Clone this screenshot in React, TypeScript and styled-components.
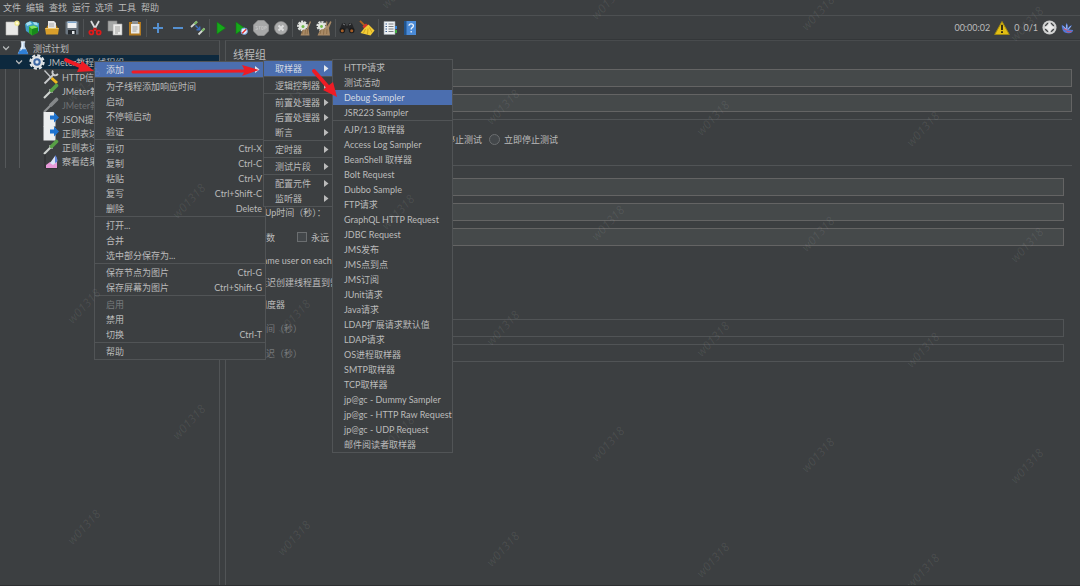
import React from 'react';
import styled, { createGlobalStyle } from 'styled-components';

const GlobalStyle = createGlobalStyle`
  * { box-sizing: border-box; }
  body {
    margin: 0;
    background: #3c3f41;
    color: #bbbbbb;
    font: 9px/15px Lato, "Noto Sans CJK SC", sans-serif;
  }
  button, input { font: inherit; color: inherit; }
`;

const Window = styled.div`
  position: relative;
  display: flex;
  flex-direction: column;
  min-height: 100vh;
  overflow: hidden;
  border-bottom: 1px solid #2d2f31;
`;

const MenuBar = styled.nav`
  display: flex;
  gap: 5px;
  height: 16px;
  padding-left: 3px;
  border-bottom: 1px solid #4d5052;
`;

const PlainButton = styled.button`
  display: flex;
  align-items: center;
  justify-content: center;
  padding: 0;
  border: 0;
  background: none;
  white-space: nowrap;
`;

const ToolBar = styled.div`
  display: flex;
  align-items: center;
  height: 24px;
  padding: 0 6px 0 2px;
  border-bottom: 1px solid #343739;
`;

const ToolButton = styled(PlainButton)`
  width: 20px;
  height: 20px;
`;

const ToolDivider = styled.span`
  width: 1px;
  height: 18px;
  margin: 0 1px;
  background: #505355;
`;

const Status = styled.div`
  display: flex;
  align-items: center;
  gap: 4px;
  margin-left: auto;
`;

const Body = styled.div`
  display: flex;
  flex: 1;
`;

const TreePane = styled.aside`
  flex: 0 0 220px;
  border-top: 1px solid #484b4d;
  border-right: 1px solid #515456;
`;

const Splitter = styled.div`
  flex: 0 0 5px;
`;

const TreeRow = styled.div<{ $level: number; $selected?: boolean; $muted?: boolean }>`
  display: flex;
  align-items: center;
  height: 14px;
  gap: 3px;
  padding-left: ${p => [3, 16, 23][p.$level]}px;
  background: ${p => (p.$selected ? '#0d293e' : 'transparent')};
  color: ${p => (p.$muted ? '#6e7173' : 'inherit')};
  white-space: nowrap;
  svg { flex: none; }
`;

const Branch = styled.div`
  margin-left: 5px;
  border-left: 1px solid #55585a;
`;

const Leaves = styled.div`
  margin-left: 13px;
  padding-top: 1px;
  border-left: 1px solid #55585a;
`;

const GroupRowWrap = styled.div`
  margin-left: -6px;
`;

const Editor = styled.main`
  flex: 1;
  min-width: 0;
  padding: 6px 8px 0 7px;
  border-top: 1px solid #484b4d;
  border-left: 1px solid #515456;
`;

const Title = styled.h1`
  margin: 0 0 6px;
  font-size: 11px;
  line-height: 16px;
  font-weight: 400;
`;

const FormRow = styled.div<{ $muted?: boolean }>`
  display: flex;
  align-items: center;
  height: 18px;
  margin-bottom: 7px;
  color: ${p => (p.$muted ? '#777a7c' : 'inherit')};
  white-space: nowrap;
`;

const FieldLabel = styled.label`
  flex: 0 0 100px;
`;

const LoopLabels = styled.div`
  display: flex;
  align-items: center;
  justify-content: space-between;
  flex: 0 0 90px;
  margin-right: 10px;
`;

const TextField = styled.input`
  flex: 1;
  min-width: 0;
  height: 18px;
  padding: 0 4px;
  border: 1px solid #646464;
  border-radius: 0;
  background: #45494a;
  &:disabled { background: #3c3f41; border-color: #515456; }
`;

const Section = styled.section<{ $gap: number; $min?: number }>`
  min-height: ${p => p.$min ?? 0}px;
  padding: ${p => p.$gap}px 8px 0 6px;
  border-top: 1px solid #515456;
`;

const CheckLabel = styled.label`
  display: flex;
  align-items: center;
  gap: 4px;
  white-space: nowrap;
`;

const CheckRows = styled.div`
  display: grid;
  grid-auto-rows: 22px;
  align-items: center;
  margin: -4px 0 4px 5px;
`;

const Tick = styled.input`
  appearance: none;
  width: 10px;
  height: 10px;
  margin: 0;
  border: 1px solid #6b6e70;
  background: #43474a;
  &[type='radio'] {
    width: 11px;
    height: 11px;
    border-radius: 50%;
  }
`;

const RadioRow = styled.div`
  display: flex;
  gap: 7px;
`;

const Popup = styled.ul<{ $x: number; $y: number; $w: number }>`
  position: absolute;
  left: ${p => p.$x}px;
  top: ${p => p.$y}px;
  width: ${p => p.$w}px;
  margin: 0;
  padding: 0;
  list-style: none;
  border: 1px solid #515456;
  background: #3c3f41;
`;

const PopupDivider = styled.li`
  height: 2px;
  border-top: 1px solid #515456;
`;

const PopupItem = styled.button<{ $active?: boolean; $inset: number }>`
  display: flex;
  align-items: center;
  justify-content: space-between;
  width: 100%;
  height: 15px;
  padding: 0 ${p => p.$inset}px 0 11px;
  border: 0;
  background: ${p => (p.$active ? '#4b6eaf' : 'transparent')};
  color: ${p => (p.$active ? '#d5dae2' : '#bbbbbb')};
  white-space: nowrap;
  &:disabled { color: #777a7c; }
`;

const Overlay = styled.svg`
  position: absolute;
  inset: 0;
  width: 100%;
  height: 100%;
  pointer-events: none;
`;

type Entry = { label: string; key?: string; active?: boolean; arrow?: boolean; off?: boolean };

const contextMenu: Entry[][] = [
  [{ label: '添加', active: true, arrow: true }],
  [{ label: '为子线程添加响应时间' }, { label: '启动' }, { label: '不停顿启动' }, { label: '验证' }],
  [
    { label: '剪切', key: 'Ctrl-X' },
    { label: '复制', key: 'Ctrl-C' },
    { label: '粘贴', key: 'Ctrl-V' },
    { label: '复写', key: 'Ctrl+Shift-C' },
    { label: '删除', key: 'Delete' },
  ],
  [{ label: '打开...' }, { label: '合并' }, { label: '选中部分保存为...' }],
  [{ label: '保存节点为图片', key: 'Ctrl-G' }, { label: '保存屏幕为图片', key: 'Ctrl+Shift-G' }],
  [{ label: '启用', off: true }, { label: '禁用' }, { label: '切换', key: 'Ctrl-T' }],
  [{ label: '帮助' }],
];

const sub = (...labels: string[]): Entry[] => labels.map(label => ({ label, arrow: true }));
const plain = (...labels: string[]): Entry[] => labels.map(label => ({ label }));

const addMenu: Entry[][] = [
  [{ label: '取样器', active: true, arrow: true }],
  sub('逻辑控制器'),
  sub('前置处理器', '后置处理器', '断言'),
  sub('定时器'),
  sub('测试片段'),
  sub('配置元件', '监听器'),
];

const samplerMenu: Entry[][] = [
  [...plain('HTTP请求', '测试活动'), { label: 'Debug Sampler', active: true }, ...plain('JSR223 Sampler')],
  plain(
    'AJP/1.3 取样器', 'Access Log Sampler', 'BeanShell 取样器', 'Bolt Request', 'Dubbo Sample',
    'FTP请求', 'GraphQL HTTP Request', 'JDBC Request', 'JMS发布', 'JMS点到点', 'JMS订阅',
    'JUnit请求', 'Java请求', 'LDAP扩展请求默认值', 'LDAP请求', 'OS进程取样器', 'SMTP取样器',
    'TCP取样器', 'jp@gc - Dummy Sampler', 'jp@gc - HTTP Raw Request', 'jp@gc - UDP Request',
    '邮件阅读者取样器',
  ),
];

type PopupProps = { groups: Entry[][]; x: number; y: number; w: number; arrowInset?: number };

function PopupMenu({ groups, x, y, w, arrowInset = 3 }: PopupProps) {
  return (
    <Popup $x={x} $y={y} $w={w}>
      {groups.map((group, g) => (
        <React.Fragment key={g}>
          {g > 0 && <PopupDivider />}
          {group.map(item => (
            <li key={item.label}>
              <PopupItem $active={item.active} $inset={item.arrow ? arrowInset : 3} disabled={item.off}>
                <span>{item.label}</span>
                {item.key && <span>{item.key}</span>}
                {item.arrow && (
                  <svg width="5" height="7" viewBox="0 0 5 7" aria-hidden="true">
                    <path d="M0 0L4.500 3.500L0 7Z" fill={item.active ? '#e4e8ee' : '#bbbbbb'} />
                  </svg>
                )}
              </PopupItem>
            </li>
          ))}
        </React.Fragment>
      ))}
    </Popup>
  );
}

const art: Record<string, React.ReactNode> = {
  file: (
    <>
      <path d="M2 2h12v13H2z" fill="#e9e9e7" stroke="#b9b9b5" strokeWidth=".6" />
      <circle cx="13" cy="3.2" r="2.6" fill="#f1ea8e" />
      <circle cx="13" cy="3.2" r="1.2" fill="#fffce0" />
    </>
  ),
  templates: (
    <>
      <path d="M1 4l5-3 4 1 5 1v8l-7 4-6-4z" fill="#3f9fc6" />
      <path d="M2 3l4-1.500 2 2.500-5 2zM9 2l4 .5 1 3-4-1z" fill="#a5def0" />
      <path d="M5 6.500l5-1 4 2v5l-6 3-3-2.500z" fill="#2fa925" />
      <path d="M5 6.500l5-1 4 2-6 1.500z" fill="#83e05f" />
      <path d="M8 9l6-1.500v5l-6 3z" fill="#178a1b" />
    </>
  ),
  open: (
    <>
      <path d="M2 8l2-3h8l2 3v6H2z" fill="#b47a12" />
      <path d="M4 1h6l2 2v6H4z" fill="#e6e6e6" />
      <path d="M5 4h5M5 6h5" stroke="#9b9b9b" strokeWidth=".8" />
      <path d="M1 8h14l-1 6.500H2z" fill="#d99f2b" />
      <path d="M1.500 8.500h13" stroke="#f3cc70" />
    </>
  ),
  save: (
    <>
      <path d="M1.500 1.500h13v13h-12l-1-1z" fill="#6b7680" />
      <path d="M3.500 1.500h9V8h-9z" fill="#eef0f2" />
      <path d="M3.500 1.500h9v1.500h-9z" fill="#7fa6cc" />
      <path d="M4 10h8v4.500H4z" fill="#252a2f" />
      <path d="M8 11h2.500v3H8z" fill="#e2e5e8" />
    </>
  ),
  cut: (
    <>
      <path d="M4 1l5 9M12 1L7 10" stroke="#d8dadb" strokeWidth="1.800" />
      <path d="M8 8l3 4M8 8l-3 4" stroke="#c21414" strokeWidth="1.800" />
      <circle cx="4.300" cy="12.500" r="2" fill="none" stroke="#e01b1b" strokeWidth="1.700" />
      <circle cx="11.700" cy="12.500" r="2" fill="none" stroke="#e01b1b" strokeWidth="1.700" />
    </>
  ),
  copy: (
    <>
      <path d="M1 1h9v10H1z" fill="#a5a7a6" stroke="#7c7e7d" strokeWidth=".6" />
      <path d="M6 4h9v11H6z" fill="#ececea" stroke="#a9a9a7" strokeWidth=".6" />
      <path d="M8 7h5M8 9h5M8 11h5M8 13h3" stroke="#8f8f8d" strokeWidth=".8" />
    </>
  ),
  paste: (
    <>
      <path d="M2 2h12v13.500H2z" fill="#b27a22" />
      <path d="M4 4h8.500v9.500H4z" fill="#ebebe9" />
      <path d="M5 1h6v3H5z" fill="#8d9092" />
      <path d="M5.500 7h5M5.500 9h5M5.500 11h4" stroke="#8f8f8d" strokeWidth=".8" />
    </>
  ),
  plus: <path d="M8 3v10M3 8h10" stroke="#5590d0" strokeWidth="2" />,
  minus: <path d="M3 8h10" stroke="#5590d0" strokeWidth="2" />,
  toggle: (
    <>
      <path d="M1 7L7 1.500" stroke="#d3d7d2" strokeWidth="1.800" />
      <path d="M4.500 4L7 1.500" stroke="#79b862" strokeWidth="2" />
      <path d="M8.500 14.500l6-6" stroke="#d3d7d2" strokeWidth="1.800" />
      <path d="M12 11l2.500-2.500" stroke="#79b862" strokeWidth="2" />
      <path d="M5.500 5.500l4 4M9.700 6.500v3.300H6.500" stroke="#3a6ec0" strokeWidth="1.400" fill="none" />
    </>
  ),
  start: <path d="M4 2l8.500 6L4 14z" fill="#17a81b" stroke="#0b7d10" strokeWidth=".6" />,
  startNoPause: (
    <>
      <path d="M3 2l8.500 6L3 14z" fill="#17a81b" stroke="#0b7d10" strokeWidth=".6" />
      <circle cx="11.200" cy="11.200" r="3.200" fill="#eaf1fb" stroke="#6d9bd8" />
      <path d="M9.200 13.200l4-4" stroke="#dd2828" strokeWidth="1.300" />
    </>
  ),
  stop: (
    <>
      <path d="M5 .3h6L15.700 5v6L11 15.700H5L.3 11V5z" fill="#a7a8a8" stroke="#8b8c8c" strokeWidth=".6" />
      <path d="M2.500 6.500h2M3 8h1.500v1.500h-2M6.500 6.500v3M5.700 6.500h2M8.700 6.500h1.500v3H8.700zM11.700 9.500v-3h1.600v1.500h-1.600" stroke="#c6c7c7" strokeWidth=".7" fill="none" />
    </>
  ),
  shutdown: (
    <>
      <circle cx="8" cy="8" r="6.500" fill="#a9aaaa" stroke="#8b8c8c" strokeWidth=".6" />
      <path d="M5.500 5.500l5 5M10.500 5.500l-5 5" stroke="#dcdddd" strokeWidth="2" />
    </>
  ),
  clear: (
    <>
      <circle cx="6.500" cy="6" r="4.500" fill="none" stroke="#dfe2e0" strokeWidth="1.800" strokeDasharray="2.200 1" />
      <circle cx="6.500" cy="6" r="3.900" fill="#e4e7e2" />
      <circle cx="7" cy="6.500" r="1.500" fill="#6fbb48" />
      <path d="M14 1l1 1-2.500 6 1 7.500H4.500L6.500 10l4-1z" fill="#a98a66" />
      <path d="M7 10l-1 4M9.500 9.500l-.5 5M11.500 9l-.3 5" stroke="#7b5c38" strokeWidth=".6" />
    </>
  ),
  clearAll: (
    <>
      <circle cx="5.500" cy="6" r="4.200" fill="none" stroke="#dfe2e0" strokeWidth="1.800" strokeDasharray="2.200 1" />
      <circle cx="5.500" cy="6" r="3.600" fill="#e4e7e2" />
      <circle cx="5.500" cy="6.500" r="1.400" fill="#6fbb48" />
      <path d="M10.500 1l1 1-1 5 4-6 1 1-2.500 6 1 7.500H1.500L4 10l5-1.500z" fill="#a98a66" />
      <path d="M5 10l-1 4M8 9.500l-.5 5M11 9l-.3 5" stroke="#7b5c38" strokeWidth=".6" />
    </>
  ),
  search: (
    <>
      <path d="M3 3.500l3-.5 1.500 3h1L10 3l3 .5 2.500 6-4 2L8 8l-3.500 3.500-4-2z" fill="#242527" />
      <circle cx="3.300" cy="10.500" r="2.800" fill="#1b1b1c" />
      <circle cx="12.700" cy="10.500" r="2.800" fill="#1b1b1c" />
      <circle cx="3.300" cy="10.700" r="1.500" fill="#a85f28" />
      <circle cx="12.700" cy="10.700" r="1.500" fill="#a85f28" />
      <path d="M4 4l2 1M10 5l2-1" stroke="#8b8e90" strokeWidth=".8" />
    </>
  ),
  broom: (
    <>
      <path d="M1 .8l5 5" stroke="#b4641c" strokeWidth="1.800" />
      <path d="M3.500 6.500l3.500-3 2.500 2L5.500 9z" fill="#d6352a" />
      <path d="M5 8.500L9.500 4.500 15.500 10.500 11.500 15.500 1.500 13z" fill="#f4cd35" />
      <path d="M6.500 9l-2 4M9 8.500l-.5 6M10.500 7.500l2.500 5" stroke="#b98a12" strokeWidth=".6" />
    </>
  ),
  functions: (
    <>
      <path d="M2 1.500h11v13H2z" fill="#edf1f4" stroke="#9aa2a8" strokeWidth=".6" />
      <path d="M3.500 4H5M3.500 6.500H5M3.500 9H5M3.500 11.500H5" stroke="#3b5f8e" strokeWidth="1.200" />
      <path d="M6.500 4h5M6.500 6.500h5M6.500 9h5M6.500 11.500h5" stroke="#5d6367" strokeWidth=".8" />
      <path d="M13 6h2v3h-2z" fill="#3a86d8" />
      <path d="M13 10h2v3h-2z" fill="#43ac43" />
    </>
  ),
  help: (
    <>
      <path d="M2 1h12v14H2z" fill="#4a8ad6" />
      <path d="M2 1h2.500v14H2z" fill="#21558f" />
      <path d="M7 5.800q0-2 2.200-2t2.200 2q0 1.200-1.200 1.800t-1 1.900M9.200 11v1.600" stroke="#eef4fb" strokeWidth="1.300" fill="none" />
    </>
  ),
  warning: (
    <>
      <path d="M8 1.500L15.300 14.500H.7z" fill="#e3bf13" stroke="#a38a12" strokeWidth="1" strokeLinejoin="round" />
      <path d="M8 4.800v5.200M8 11.300v1.600" stroke="#231f10" strokeWidth="1.800" />
    </>
  ),
  threads: (
    <>
      <circle cx="8" cy="8" r="7.500" fill="#cfd0d0" />
      <circle cx="8" cy="8" r="4.500" fill="#d9dada" stroke="#3c3f41" strokeWidth="1.600" />
      <path d="M8 2.500v11M2.500 8h11" stroke="#ececec" strokeWidth="2.600" />
    </>
  ),
  brand: (
    <>
      <path d="M1 4.500Q4 6 6 9 5 5 7 2 9 5 8.500 9 10 6 13.500 5 12.500 8 9.500 10.500L15 11Q14.500 14.500 10 15 4 15.500 2 11 .5 8 1 4.500z" fill="#4f78d8" />
      <path d="M3.500 9.500q2.500 1.500 4.500 1.500M7 13q3 .5 6-.5" stroke="#d0506a" strokeWidth="1.300" fill="none" />
      <path d="M2.500 6.500l4 4M7 4.500v5M12 6.500L8.500 10.500" stroke="#b9cbf8" strokeWidth="1" />
    </>
  ),
  flask: (
    <>
      <path d="M6 1h4v5l4 8.500H2L6 6z" fill="#c6dcf2" />
      <path d="M4.500 9.500h7L14 15H2z" fill="#2f7fd6" />
      <path d="M5.500 1h5" stroke="#eef4fa" strokeWidth="1.400" />
      <path d="M7.200 2v5l-2 4" stroke="#f6fafe" strokeWidth="1.200" fill="none" />
    </>
  ),
  gear: (
    <>
      <circle cx="8" cy="8" r="6.600" fill="none" stroke="#dfe2e5" strokeWidth="2.200" strokeDasharray="3.200 1.980" />
      <circle cx="8" cy="8" r="6" fill="#dfe2e5" />
      <circle cx="8" cy="8" r="3.700" fill="#3c67a4" />
      <circle cx="8" cy="8" r="1.700" fill="#dfe7f1" />
    </>
  ),
  config: (
    <>
      <path d="M1.500 1.500l6.500 7" stroke="#c5c8ca" strokeWidth="1.300" />
      <path d="M8.500 9l5.500 5" stroke="#eeb81e" strokeWidth="3" />
      <path d="M1.500 14.500L11 5" stroke="#c9cbcd" strokeWidth="1.800" />
      <path d="M10 1.500Q8.500 4 10.500 5.700T15 5" stroke="#c9cbcd" strokeWidth="1.800" fill="none" />
    </>
  ),
  sampler: (
    <>
      <path d="M1 15l7-7" stroke="#cfd3d0" strokeWidth="2.200" />
      <path d="M6.500 6.500l3 3" stroke="#dfe2df" strokeWidth="1.600" />
      <path d="M8.500 7.500L13.500 2.500" stroke="#58a046" strokeWidth="3.600" strokeLinecap="round" />
    </>
  ),
  samplerOff: (
    <>
      <path d="M1 15l8-8" stroke="#8f9294" strokeWidth="2.200" />
      <path d="M8 8L13.500 2.500" stroke="#85888a" strokeWidth="3.600" strokeLinecap="round" />
    </>
  ),
  extractor: (
    <>
      <path d="M.5 1h10L12.500 3.500v12H.5z" fill="#eceeef" />
      <path d="M7 4.500h4V1.500L16 6.500l-5 5V8.500H7z" fill="#1f73cf" />
    </>
  ),
  results: (
    <>
      <path d="M2 1v14h13" stroke="#2a2c2e" fill="none" />
      <path d="M3 15v-3l4-3 3 2 4-3v7z" fill="#e79ad8" />
      <path d="M7 10l5-7q3 3 2 6l-4 3z" fill="#dce4f7" />
      <path d="M12 2q3 3 2 7l-2 1z" fill="#5f83d8" />
    </>
  ),
};

function Icon({ name, size = 16 }: { name: string; size?: number }) {
  return (
    <svg width={size} height={size} viewBox="0 0 16 16" fill="none" aria-hidden="true">
      {art[name]}
    </svg>
  );
}

const Chevron = () => (
  <svg width="10" height="8" viewBox="0 0 10 8" fill="none" aria-hidden="true">
    <path d="M0 2.500L3 5.500L6 2.500" stroke="#b4b6b7" strokeWidth="1.300" />
  </svg>
);

const toolGroups = [
  ['file', 'templates', 'open', 'save'],
  ['cut', 'copy', 'paste'],
  ['plus', 'minus', 'toggle'],
  ['start', 'startNoPause', 'stop', 'shutdown'],
  ['clear', 'clearAll'],
  ['search', 'broom'],
  ['functions', 'help'],
];

const leaves: [string, string, boolean?][] = [
  ['config', 'HTTP信息头'],
  ['sampler', 'JMeter教程'],
  ['samplerOff', 'JMeter教程', true],
  ['extractor', 'JSON提取器'],
  ['extractor', '正则表达式'],
  ['sampler', '正则表达式'],
  ['results', '察看结果树'],
];

const marks: [number, number][] = [];
for (let col = 0; col < 11; col++) {
  for (let row = -1; row < 4; row++) {
    marks.push([
      Math.round(-23 + col * 105 - col / 6),
      Math.round((col % 2 ? 84 : 189) + Math.floor(col / 2) * 11 + row * 221),
    ]);
  }
}

export default function App() {
  return (
    <>
      <GlobalStyle />
      <Window>
        <MenuBar>
          {['文件', '编辑', '查找', '运行', '选项', '工具', '帮助'].map(m => (
            <PlainButton key={m}>{m}</PlainButton>
          ))}
        </MenuBar>
        <ToolBar>
          {toolGroups.map((group, g) => (
            <React.Fragment key={g}>
              {g > 0 && <ToolDivider />}
              {group.map(name => (
                <ToolButton key={name} aria-label={name}>
                  <Icon name={name} />
                </ToolButton>
              ))}
            </React.Fragment>
          ))}
          <Status>
            <span>00:00:02</span>
            <Icon name="warning" />
            <span>0</span>
            <span>0/1</span>
            <Icon name="threads" size={15} />
            <Icon name="brand" size={13} />
          </Status>
        </ToolBar>
        <Body>
          <TreePane>
            <TreeRow $level={0}>
              <Chevron />
              <Icon name="flask" size={14} />
              测试计划
            </TreeRow>
            <Branch>
              <GroupRowWrap>
                <TreeRow $level={1} $selected>
                  <Chevron />
                  <Icon name="gear" />
                  JMeter教程-线程组
                </TreeRow>
              </GroupRowWrap>
              <Leaves>
                {leaves.map(([icon, label, muted], i) => (
                  <TreeRow key={i} $level={2} $muted={muted}>
                    <Icon name={icon} />
                    {label}
                  </TreeRow>
                ))}
              </Leaves>
            </Branch>
          </TreePane>
          <Splitter />
          <Editor>
            <Title>线程组</Title>
            <FormRow>
              <FieldLabel htmlFor="name">名称：</FieldLabel>
              <TextField id="name" />
            </FormRow>
            <FormRow>
              <FieldLabel htmlFor="note">注释：</FieldLabel>
              <TextField id="note" />
            </FormRow>
            <Section $gap={12} $min={46}>
              <RadioRow>
                {['继续', '启动下一进程循环', '停止线程', '停止测试', '立即停止测试'].map(r => (
                  <CheckLabel key={r}>
                    <Tick type="radio" name="onError" />
                    {r}
                  </CheckLabel>
                ))}
              </RadioRow>
            </Section>
            <Section $gap={12}>
              <FormRow>
                <FieldLabel htmlFor="threads">线程数：</FieldLabel>
                <TextField id="threads" />
              </FormRow>
              <FormRow>
                <FieldLabel htmlFor="ramp">Ramp-Up时间（秒）：</FieldLabel>
                <TextField id="ramp" />
              </FormRow>
              <FormRow>
                <LoopLabels>
                  <label htmlFor="loops">循环次数</label>
                  <CheckLabel>
                    <Tick type="checkbox" />
                    永远
                  </CheckLabel>
                </LoopLabels>
                <TextField id="loops" />
              </FormRow>
              <CheckRows>
                {['Same user on each', '延迟创建线程直到需要', '调度器'].map(option => (
                  <CheckLabel key={option}>
                    <Tick type="checkbox" />
                    {option}
                  </CheckLabel>
                ))}
              </CheckRows>
              <FormRow $muted>
                <FieldLabel htmlFor="duration">持续时间（秒）</FieldLabel>
                <TextField id="duration" disabled />
              </FormRow>
              <FormRow $muted>
                <FieldLabel htmlFor="delay">启动延迟（秒）</FieldLabel>
                <TextField id="delay" disabled />
              </FormRow>
            </Section>
          </Editor>
        </Body>

        <PopupMenu groups={contextMenu} x={94} y={61} w={172} arrowInset={5} />
        <PopupMenu groups={addMenu} x={263} y={60} w={70} />
        <PopupMenu groups={samplerMenu} x={332} y={59} w={121} />

        <Overlay aria-hidden="true">
          <g fill="#ffffff" fillOpacity=".08" fontFamily="Noto Sans" fontSize="12" fontStyle="italic" textAnchor="middle">
            {marks.map(([x, y]) => (
              <text key={`${x},${y}`} transform={`translate(${x + 5} ${y + 4}) rotate(-47)`}>
                w01318
              </text>
            ))}
          </g>
          <g fill="#ee1c25" stroke="#ee1c25">
            <path d="M66 60L82 67" strokeWidth="4" strokeLinecap="round" />
            <path d="M94 71L77 72L82 61Z" stroke="none" />
            <path d="M133 72L246 71" strokeWidth="3" strokeLinecap="round" />
            <path d="M259 70L242 65L245 71L242 76Z" stroke="none" />
            <path d="M314 71L328 87" strokeWidth="4" strokeLinecap="round" />
            <path d="M337 97L323 90L333 82Z" stroke="none" />
          </g>
        </Overlay>
      </Window>
    </>
  );
}
